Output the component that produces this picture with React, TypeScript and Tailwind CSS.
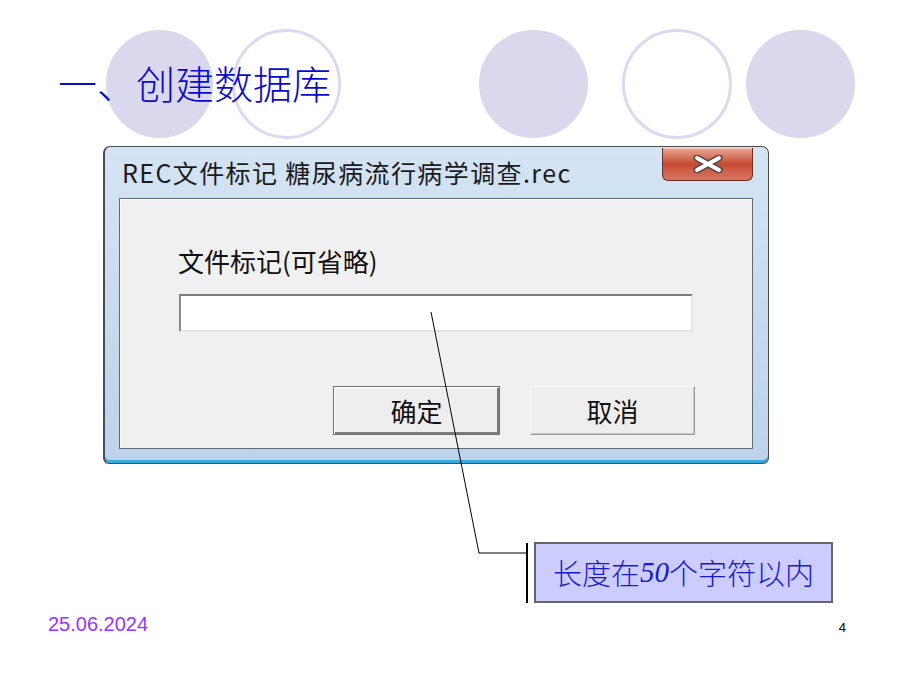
import React from "react";

const CloseButton = () => (
  <div className="self-start mt-[1px] w-[91px] h-[33px] rounded-b-[6px] border border-t-0 border-[#6b2e22] bg-linear-to-b from-[#e9a796] via-[#c64b32] to-[#d87661] flex items-center justify-center shadow-[inset_0_1px_0_#f3c3b6]">
    <svg width="32" height="18" viewBox="0 0 32 18">
      <path d="M5 3 L27 15 M27 3 L5 15" stroke="#4b4b4b" strokeWidth="7" strokeLinecap="round" fill="none" />
      <path d="M5 3 L27 15 M27 3 L5 15" stroke="#ffffff" strokeWidth="4" strokeLinecap="round" fill="none" />
    </svg>
  </div>
);

const Dialog = () => (
  <div className="ml-[103px] mt-[44px] w-[666px] h-[318px] flex flex-col rounded-t-[7px] rounded-b-[6px] border border-l-2 border-[#464c52] bg-linear-to-b from-[#d4e4f4] to-[#bcd3eb] shadow-[inset_0_-3px_0_#39a8dc]">
    {/* title bar */}
    <div className="h-[51px] flex items-center justify-between pl-[17px] pr-[15px]">
      <span className="text-[25px] leading-none tracking-[1.4px] text-[#1b1b1b]">REC文件标记 糖尿病流行病学调查.rec</span>
      <CloseButton />
    </div>

    {/* client area */}
    <div className="ml-[14px] mr-[15px] h-[251px] flex flex-col pl-[58px] bg-[#f0f0f0] border border-[#5f6a76] shadow-[inset_1px_1px_0_#ffffff]">
      <label className="mt-[47px] text-[26px] leading-[30px] text-[#111111]">文件标记(可省略)</label>
      <div className="ml-[1px] mt-[18px] w-[514px] h-[38px] bg-white border-2 border-t-[#7b7b7b] border-l-[#8a8a8a] border-r-[#e4e4e4] border-b-[#e4e4e4]" />
      <div className="mt-[54px] flex gap-[30px] pl-[155px]">
        <button className="w-[167px] h-[49px] bg-[#eeeeee] border border-[#6f6f6f] shadow-[inset_1px_1px_0_#ffffff,inset_-2px_-2px_0_#7d7d7d] text-[26px] leading-none text-[#111111]">
          确定
        </button>
        <button className="w-[165px] h-[49px] bg-[#eeeeee] border border-t-[#ffffff] border-l-[#ffffff] border-r-[#9a9a9a] border-b-[#9a9a9a] shadow-[inset_-1px_-1px_0_#c8c8c8] text-[26px] leading-none text-[#111111]">
          取消
        </button>
      </div>
    </div>
  </div>
);

export default function App() {
  return (
    <div className="relative w-[900px] h-[675px] overflow-hidden bg-white font-['Noto_Sans_CJK_SC',sans-serif]">
      {/* background circles */}
      <div className="absolute left-[106px] top-[30px] w-[107px] h-[108px] rounded-full bg-[#dad8ed]" />
      <div className="absolute left-[232px] top-[29px] w-[109px] h-[110px] rounded-full border-[3px] border-[#dcdaf0]" />
      <div className="absolute left-[479px] top-[30px] w-[109px] h-[108px] rounded-full bg-[#dad8ed]" />
      <div className="absolute left-[622px] top-[29px] w-[110px] h-[110px] rounded-full border-[3px] border-[#dcdaf0]" />
      <div className="absolute left-[746px] top-[30px] w-[109px] h-[108px] rounded-full bg-[#dad8ed]" />

      <div className="relative flex flex-col">
        <h1 className="pt-[63px] pl-[58px] text-[39px] leading-[39px] font-light text-[#0a0acc]">一、创建数据库</h1>

        <Dialog />

        {/* callout */}
        <div className="mt-[78px] flex items-center pl-[526px] gap-[6px]">
          <div className="w-[2px] h-[60px] bg-black" />
          <div className="w-[299px] h-[61px] bg-[#ccccff] border-2 border-[#666666] flex items-center justify-center text-[29px] leading-none font-light text-[#1a1acc]">
            长度在<i className="font-['Liberation_Serif',serif] font-normal">50</i>个字符以内
          </div>
        </div>

        <div className="mt-[11px] flex justify-between pl-[48px] pr-[54px]">
          <span className="font-['Liberation_Sans',sans-serif] text-[20px] leading-none text-[#9933ff]">25.06.2024</span>
          <span className="mt-[7px] font-['Liberation_Sans',sans-serif] text-[13px] leading-none text-black">4</span>
        </div>
      </div>

      {/* leader line */}
      <svg className="absolute inset-0 pointer-events-none" width="900" height="675">
        <polyline points="431,312 479,553 527,553" fill="none" stroke="#000000" strokeWidth="1" />
      </svg>
    </div>
  );
}
